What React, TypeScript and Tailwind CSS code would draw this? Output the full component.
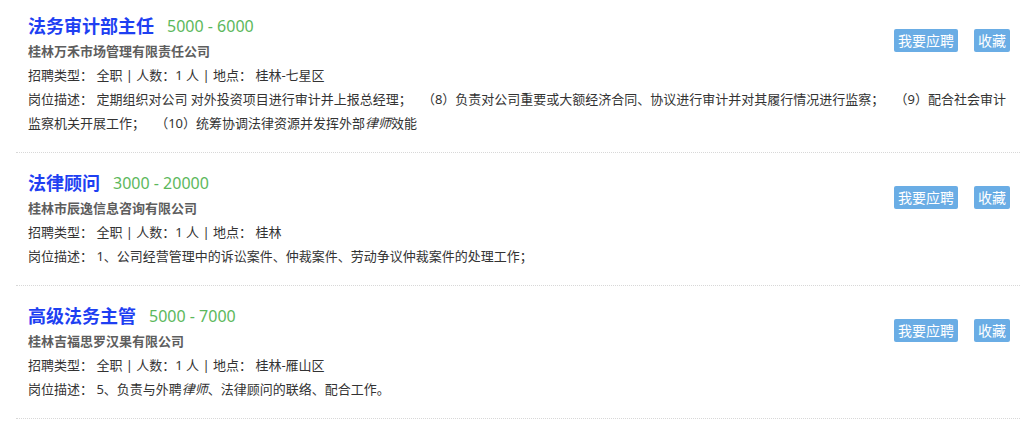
import type { ReactNode } from 'react';

type Job = {
  id: number;
  title: string;
  salary: string;
  company: string;
  place: string;
  desc: ReactNode;
};

const JOBS: Job[] = [
  {
    id: 1,
    title: '法务审计部主任',
    salary: '5000 - 6000',
    company: '桂林万禾市场管理有限责任公司',
    place: '桂林-七星区',
    desc: (
      <>
        定期组织对公司 对外投资项目进行审计并上报总经理；&nbsp;&nbsp;&nbsp;（8）负责对公司重要或大额经济合同、协议进行审计并对其履行情况进行监察；&nbsp;&nbsp;&nbsp;（9）配合社会审计
        <br />
        监察机关开展工作；&nbsp;&nbsp;&nbsp;（10）统筹协调法律资源并发挥外部<em className="italic">律师</em>效能
      </>
    ),
  },
  {
    id: 2,
    title: '法律顾问',
    salary: '3000 - 20000',
    company: '桂林市辰逸信息咨询有限公司',
    place: '桂林',
    desc: <>1、公司经营管理中的诉讼案件、仲裁案件、劳动争议仲裁案件的处理工作；</>,
  },
  {
    id: 3,
    title: '高级法务主管',
    salary: '5000 - 7000',
    company: '桂林吉福思罗汉果有限公司',
    place: '桂林-雁山区',
    desc: (
      <>
        5、负责与外聘<em className="italic">律师</em>、法律顾问的联络、配合工作。
      </>
    ),
  },
];

export default function App() {
  return (
    <div
      className="min-h-[421px] bg-white text-[13px] text-[#333]"
      style={{ fontFamily: '"Noto Sans", "Noto Sans CJK SC", sans-serif' }}
    >
      <div className="ml-[16px] w-[1004px]">
        {JOBS.map((job, i) => (
          <div
            key={job.id}
            className={
              (i === 0 ? 'pt-[13px] ' : 'pt-[17px] ') +
              'pb-[17px] pl-[12px] pr-[10px] border-b border-dotted border-[#d8d8d8]'
            }
          >
            <div className="flex justify-between">
              <div>
                <div className="flex items-center h-[26px] overflow-hidden">
                  <span className="text-[18px] leading-[26px] font-bold text-[#1e3ff2]">{job.title}</span>
                  <span className="ml-[13px] text-[16px] leading-[26px] text-[#5cb85c]">{job.salary}</span>
                </div>
                <p className="h-[24px] leading-[24px] font-bold text-[#5e5e5e]">{job.company}</p>
              </div>
              <div className="flex gap-[16px] mt-[16px] self-start">
                <button className="h-[23px] px-[4px] rounded-[2px] bg-[#6aade5] text-white text-[14px] leading-[23px]">
                  我要应聘
                </button>
                <button className="h-[23px] px-[4px] rounded-[2px] bg-[#6aade5] text-white text-[14px] leading-[23px]">
                  收藏
                </button>
              </div>
            </div>
            <p className="leading-[24px]">
              招聘类型：&nbsp;全职 | 人数：1 人 | 地点：&nbsp;{job.place}
            </p>
            <p className="leading-[24px]">
              岗位描述：&nbsp;{job.desc}
            </p>
          </div>
        ))}
      </div>
    </div>
  );
}
